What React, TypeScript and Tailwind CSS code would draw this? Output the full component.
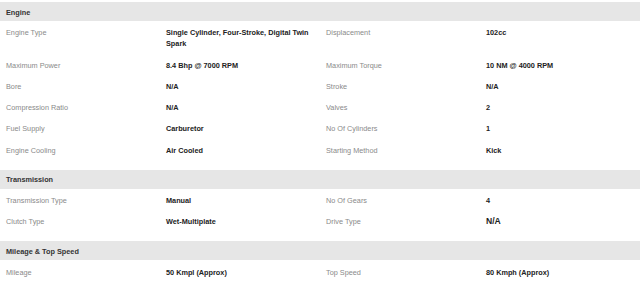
const sections = [
  {
    title: "Engine",
    rows: [
      ["Engine Type", "Single Cylinder, Four-Stroke, Digital Twin Spark", "Displacement", "102cc"],
      ["Maximum Power", "8.4 Bhp @ 7000 RPM", "Maximum Torque", "10 NM @ 4000 RPM"],
      ["Bore", "N/A", "Stroke", "N/A"],
      ["Compression Ratio", "N/A", "Valves", "2"],
      ["Fuel Supply", "Carburetor", "No Of Cylinders", "1"],
      ["Engine Cooling", "Air Cooled", "Starting Method", "Kick"],
    ],
  },
  {
    title: "Transmission",
    rows: [
      ["Transmission Type", "Manual", "No Of Gears", "4"],
      ["Clutch Type", "Wet-Multiplate", "Drive Type", "N/A*"],
    ],
  },
  {
    title: "Mileage & Top Speed",
    rows: [["Mileage", "50 Kmpl (Approx)", "Top Speed", "80 Kmph (Approx)"]],
  },
];

const Value = ({ text }: { text: string }) => {
  // the drive type value is rendered a touch larger in the source page
  if (text.endsWith("*")) {
    return <span className="text-[8.6px] font-bold text-[#222]">{text.slice(0, -1)}</span>;
  }
  return <span className="font-bold text-[#222]">{text}</span>;
};

export default function App() {
  return (
    <div className="w-[640px] h-[286px] bg-white pt-[2px] font-['Liberation_Sans',Arial,sans-serif] text-[7.3px] leading-[11px] overflow-hidden">
      {sections.map((section) => (
        <div key={section.title} className="mb-[10px]">
          <div className="h-[19px] bg-[#e6e6e6] flex items-center px-[6px] pt-[1px] font-bold text-[#333]">
            {section.title}
          </div>
          {section.rows.map((row) => (
            <div key={row[0]} className="grid grid-cols-4 pt-[6.3px] pb-[4px]">
              <div className="px-[6px] text-[#8a8a8a]">{row[0]}</div>
              <div className="px-[6px]">
                <Value text={row[1]} />
              </div>
              <div className="px-[6px] text-[#8a8a8a]">{row[2]}</div>
              <div className="px-[6px]">
                <Value text={row[3]} />
              </div>
            </div>
          ))}
        </div>
      ))}
    </div>
  );
}
